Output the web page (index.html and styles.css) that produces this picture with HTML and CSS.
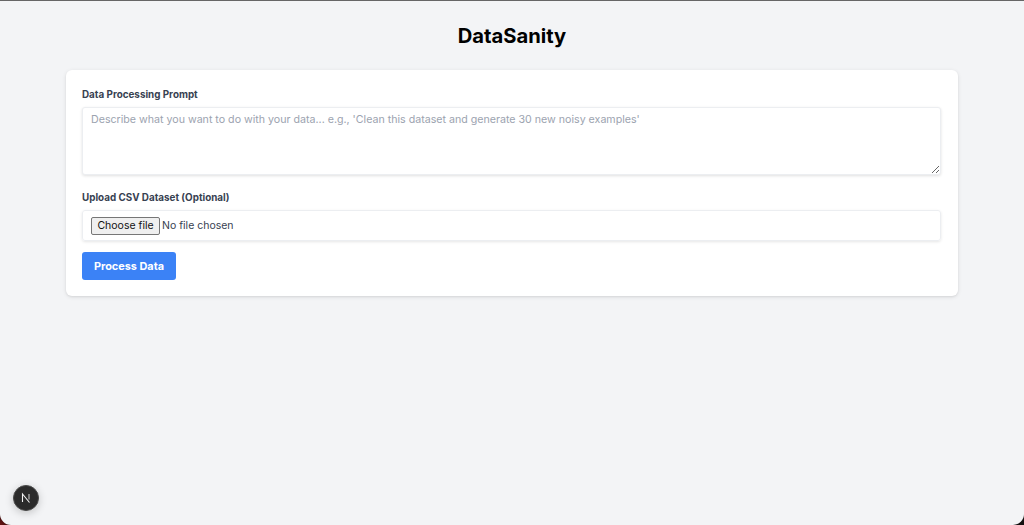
FILE: index.html
```html
<!DOCTYPE html>
<html lang="en">
<head>
<meta charset="utf-8">
<title>DataSanity</title>
<link rel="stylesheet" href="styles.css">
</head>
<body>
<div class="window">
  <main class="page">
    <h1 class="title">DataSanity</h1>
    <form class="card">
      <label class="label" for="prompt">Data Processing Prompt</label>
      <textarea class="prompt" id="prompt" placeholder="Describe what you want to do with your data... e.g., 'Clean this dataset and generate 30 new noisy examples'"></textarea>
      <label class="label label-upload" for="file">Upload CSV Dataset (Optional)</label>
      <div class="file-box" id="file">
        <span class="file-btn">Choose file</span>
        <span class="file-name">No file chosen</span>
      </div>
      <button class="submit" type="button">Process Data</button>
    </form>
  </main>
  <div class="next-badge">
    <svg width="12" height="12" viewBox="0 0 12 12" fill="none" aria-hidden="true">
      <path d="M2.5 10V2L9.5 10.5" stroke="#f2f2f2" stroke-width="1.1"/>
      <path d="M9 2V7.5" stroke="#c8c8c8" stroke-width="1.1"/>
    </svg>
  </div>
</div>
</body>
</html>
```
FILE: styles.css
```css
* { box-sizing: border-box; }
html, body { margin: 0; height: 100%; }
body {
  background: radial-gradient(circle at 0 100%, #6b1414 0, #2a0808 12px, #111 100%);
  overflow: hidden;
  font-family: Inter, "Liberation Sans", sans-serif;
}
.window {
  position: relative;
  height: 525px;
  background: #f3f4f6;
  border-top: 1px solid #666;
  border-radius: 0 0 11px 11px;
  overflow: hidden;
}
.page { padding: 0 66px; }
.title {
  margin: 0;
  padding-top: 22px;
  height: 69px;
  font-size: 20.2px;
  line-height: 26px;
  font-weight: 700;
  text-align: center;
  color: #000;
}
.card {
  display: flex;
  flex-direction: column;
  align-items: flex-start;
  height: 226px;
  padding: 16px 17px 16px 16px;
  background: #fff;
  border-radius: 6px;
  box-shadow: 0 1px 4px rgba(0,0,0,.1), 0 1px 2px rgba(0,0,0,.05);
}
.label {
  font-size: 9.85px;
  line-height: 16px;
  font-weight: 700;
  color: #374151;
}
.prompt {
  display: block;
  width: 100%;
  height: 68px;
  margin-top: 5px;
  padding: 4px 8px;
  border: 1px solid #eceef1;
  border-radius: 3px;
  background: #fff;
  box-shadow: 0 1px 3px rgba(0,0,0,.12);
  font: 400 10.65px/16px Inter, "Liberation Sans", sans-serif;
  color: #374151;
  outline: none;
}
.prompt::placeholder { color: #9ca3af; opacity: 1; }
.label-upload { margin-top: 14px; }
.file-box {
  display: flex;
  align-items: center;
  gap: 2px;
  width: 100%;
  height: 31px;
  margin-top: 5px;
  padding: 0 8px;
  border: 1px solid #eceef1;
  border-radius: 3px;
  box-shadow: 0 1px 3px rgba(0,0,0,.1);
  font-size: 10.5px;
  color: #374151;
}
.file-btn {
  display: flex;
  align-items: center;
  justify-content: center;
  width: 69px;
  height: 18px;
  background: #efefef;
  border: 1px solid #767676;
  border-radius: 2px;
  color: #111;
}
.submit {
  width: 94px;
  height: 28px;
  margin-top: 11px;
  padding: 0;
  border: 0;
  border-radius: 3px;
  background: #3b82f6;
  color: #fff;
  font: 700 10.9px/16px Inter, "Liberation Sans", sans-serif;
}
.next-badge {
  position: absolute;
  left: 13px;
  top: 484px;
  width: 26px;
  height: 26px;
  display: flex;
  align-items: center;
  justify-content: center;
  background: #2b2b2b;
  border: 1px solid #4a4a4a;
  border-radius: 50%;
  box-shadow: 0 2px 8px rgba(0,0,0,.2);
}
```
